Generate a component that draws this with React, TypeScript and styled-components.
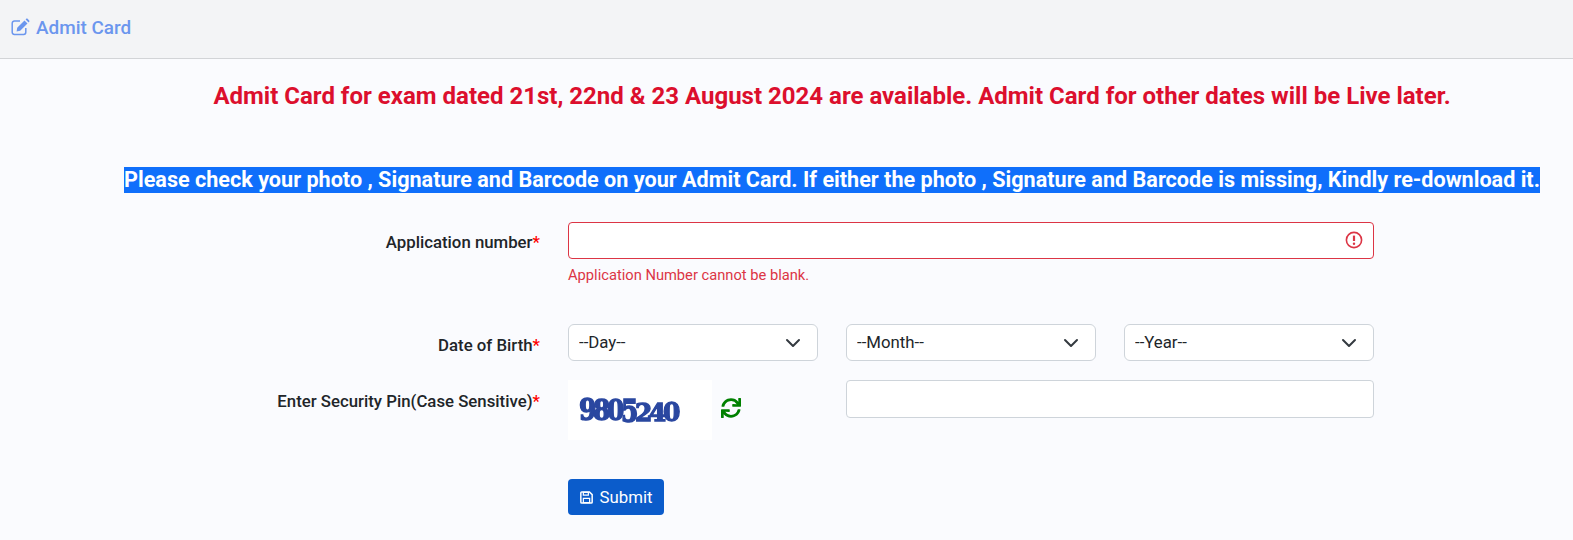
import React from "react";
import styled, { createGlobalStyle } from "styled-components";
import { FaSync } from "react-icons/fa";

const Global = createGlobalStyle`
  html, body { margin: 0; padding: 0; background: #fafbfe; }
  body { font-family: Roboto, "Liberation Sans", sans-serif; color: #212529; height: 540px; overflow: hidden; }
`;

const Header = styled.header`
  height: 54px;
  padding-bottom: 4px;
  box-sizing: content-box;
  background: #f3f4f6;
  border-bottom: 1px solid #d2d4d7;
  display: flex;
  align-items: center;
  padding-left: 11px;
  gap: 6px;
  color: #6b96ee;
  font-size: 18.9px;
  font-weight: 500;
`;

const HeaderIcon = styled.svg`
  width: 19px;
  height: 18px;
  flex: none;
`;

const Main = styled.main`
  margin-left: 124px;
  width: 1416px;
  display: flex;
  flex-direction: column;
`;

const Notice = styled.h2`
  margin: 23px 0 0;
  text-align: center;
  font-size: 24px;
  line-height: 28px;
  font-weight: 700;
  color: #dc0f2d;
`;

const Highlight = styled.div`
  margin-top: 57px;
  text-align: center;
  font-size: 21.6px;
  line-height: 26px;
  font-weight: 700;
  color: #fff;
  background: #0f6ffb;
  white-space: nowrap;
`;

const Form = styled.form`
  margin-top: 29px;
  display: grid;
  grid-template-columns: 416px 806px;
  column-gap: 28px;
`;

const Label = styled.label<{ $top: number }>`
  padding-top: ${(p) => p.$top}px;
  text-align: right;
  font-size: 16.8px;
  line-height: 24px;
  font-weight: 500;
  color: #212529;
  height: fit-content;
`;

const Star = styled.span`
  color: #f00;
`;

const Field = styled.div<{ $bottom: number }>`
  padding-bottom: ${(p) => p.$bottom}px;
`;

const InputWrap = styled.div`
  position: relative;
`;

const TextInput = styled.input<{ $invalid?: boolean }>`
  display: block;
  box-sizing: border-box;
  width: 100%;
  height: ${(p) => (p.$invalid ? 37 : 38)}px;
  background: #fff;
  border: 1px solid ${(p) => (p.$invalid ? "#dc3545" : "#ced4da")};
  border-radius: 4px;
  outline: none;
`;

const AlertMark = styled.svg`
  position: absolute;
  right: 11px;
  top: 9px;
  width: 18px;
  height: 18px;
`;

const ErrorText = styled.div`
  margin-top: 6px;
  font-size: 14.7px;
  line-height: 21px;
  color: #dc3545;
`;

const SelectRow = styled.div`
  display: grid;
  grid-template-columns: 250px 250px 250px;
  column-gap: 28px;
`;

const SelectWrap = styled.div`
  position: relative;
`;

const Select = styled.select`
  display: block;
  width: 100%;
  box-sizing: border-box;
  height: 37px;
  appearance: none;
  padding: 0 36px 2px 10px;
  background: #fff;
  border: 1px solid #ced4da;
  border-radius: 6px;
  outline: none;
  font-family: Roboto, "Liberation Sans", sans-serif;
  font-size: 16.8px;
  color: #212529;
`;

const Chevron = styled.svg`
  position: absolute;
  right: 17px;
  top: 11px;
  width: 16px;
  height: 16px;
  pointer-events: none;
`;

const CaptchaRow = styled.div`
  display: grid;
  grid-template-columns: 250px 528px;
  column-gap: 28px;
`;

const CaptchaCell = styled.div`
  display: flex;
  align-items: flex-start;
  gap: 9px;
`;

const CaptchaBox = styled.div`
  width: 144px;
  height: 60px;
  background: #fff;
  display: flex;
  align-items: center;
  padding: 1px 0 0 11px;
  box-sizing: border-box;
  font-family: "DejaVu Serif", serif;
  font-weight: 700;
  color: #2a47a0;
  font-size: 25px;
  letter-spacing: -3.4px;
  filter: blur(0.5px);
  -webkit-text-stroke: 1.3px #2a47a0;
`;

const Digit = styled.span<{ $drop: number; $scale: number }>`
  display: inline-block;
  transform: translateY(${(p) => p.$drop}px) scale(1, ${(p) => p.$scale});
`;

const Refresh = styled.span`
  display: flex;
  margin-top: 18px;
  color: #008000;
  font-size: 20px;
`;

const Submit = styled.button`
  grid-column: 2;
  justify-self: start;
  width: 96px;
  height: 36px;
  margin-top: 1px;
  display: flex;
  align-items: center;
  justify-content: center;
  gap: 7px;
  padding: 0;
  background: #0b5ccb;
  border: 0;
  border-radius: 4px;
  color: #fff;
  font-family: Roboto, "Liberation Sans", sans-serif;
  font-size: 16.8px;
`;

const SaveIcon = styled.svg`
  width: 13px;
  height: 13px;
  flex: none;
`;

const digits: [string, number, number][] = [
  ["9", -1, 1.2],
  ["8", 0, 1.1],
  ["0", 0, 1.12],
  ["5", 0, 1.3],
  ["2", 2, 1],
  ["4", 2, 1],
  ["0", 2, 1.05],
];

export default function App() {
  return (
    <>
      <Global />
      <Header>
        <HeaderIcon viewBox="0 0 19 18" fill="none">
          <path d="M9 3H3.5A2.2 2.2 0 0 0 1.2 5.2v9.1a2.2 2.2 0 0 0 2.3 2.2h9.1a2.2 2.2 0 0 0 2.2-2.2V10" stroke="#6b96ee" strokeWidth="1.5" />
          <path d="M6.2 9.8 13.5 2.5l3 3-7.3 7.3-3.6.6zM14.6 1.4l.6-.6c.4-.4 1-.4 1.4 0l1.6 1.6c.4.4.4 1 0 1.4l-.6.6z" fill="#6b96ee" />
        </HeaderIcon>
        <span>Admit Card</span>
      </Header>
      <Main>
        <Notice>Admit Card for exam dated 21st, 22nd &amp; 23 August 2024 are available. Admit Card for other dates will be Live later.</Notice>
        <Highlight>Please check your photo , Signature and Barcode on your Admit Card. If either the photo , Signature and Barcode is missing, Kindly re-download it.</Highlight>
        <Form onSubmit={(e) => e.preventDefault()}>
          <Label $top={8}>Application number<Star>*</Star></Label>
          <Field $bottom={38}>
            <InputWrap>
              <TextInput $invalid />
              <AlertMark viewBox="0 0 18 18" fill="none">
                <circle cx="9" cy="9" r="7.6" stroke="#dc3545" strokeWidth="1.6" />
                <path d="M9 4.6v5.4" stroke="#dc3545" strokeWidth="2.2" />
                <circle cx="9" cy="12.8" r="1.2" fill="#dc3545" />
              </AlertMark>
            </InputWrap>
            <ErrorText>Application Number cannot be blank.</ErrorText>
          </Field>
          <Label $top={9}>Date of Birth<Star>*</Star></Label>
          <Field $bottom={19}>
            <SelectRow>
              {["--Day--", "--Month--", "--Year--"].map((t) => (
                <SelectWrap key={t}>
                  <Select defaultValue={t}>
                    <option>{t}</option>
                  </Select>
                  <Chevron viewBox="0 0 16 16" fill="none">
                    <path d="M2 5l6 6 6-6" stroke="#343a40" strokeWidth="2" strokeLinecap="round" strokeLinejoin="round" />
                  </Chevron>
                </SelectWrap>
              ))}
            </SelectRow>
          </Field>
          <Label $top={9}>Enter Security Pin(Case Sensitive)<Star>*</Star></Label>
          <Field $bottom={38}>
            <CaptchaRow>
              <CaptchaCell>
                <CaptchaBox>
                  {digits.map(([d, drop, scale], i) => (
                    <Digit key={i} $drop={drop} $scale={scale}>{d}</Digit>
                  ))}
                </CaptchaBox>
                <Refresh><FaSync /></Refresh>
              </CaptchaCell>
              <TextInput />
            </CaptchaRow>
          </Field>
          <Submit type="submit">
            <SaveIcon viewBox="0 0 14 14" fill="none">
              <path d="M1.8 1h8.4l2.9 2.9v8.2a.9.9 0 0 1-.9.9H1.8a.9.9 0 0 1-.9-.9V1.9a.9.9 0 0 1 .9-.9z" stroke="#fff" strokeWidth="1.6" />
              <path d="M3.6 1.5h5.4v3H3.6zM3.6 8h6.8v4.6H3.6z" stroke="#fff" strokeWidth="1.3" />
            </SaveIcon>
            Submit
          </Submit>
        </Form>
      </Main>
    </>
  );
}
